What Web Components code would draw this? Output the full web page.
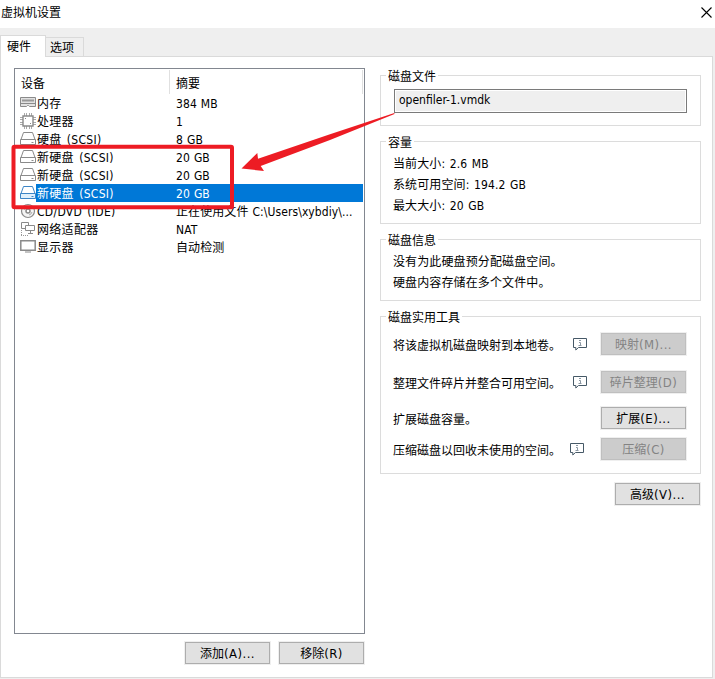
<!DOCTYPE html>
<html lang="zh-CN">
<head>
<meta charset="utf-8">
<title>虚拟机设置</title>
<style>
html,body{margin:0;padding:0;overflow:hidden}
body{width:715px;height:679px;font:12px/18px "DejaVu Sans Condensed","Noto Sans CJK SC",sans-serif;color:#000;background:#efefef}
</style>
</head>
<body>
<vm-settings></vm-settings>
<script>
const define = (name, css, html) => customElements.define(name, class extends HTMLElement {
  constructor() {
    super();
    const t = document.createElement('template');
    t.innerHTML = `<style>*{box-sizing:border-box}:host{box-sizing:border-box}${css}</style>` + (typeof html === 'function' ? html(this) : html);
    this.attachShadow({mode: 'open'}).append(t.content.cloneNode(true));
  }
});

const disk = (c, f) => `<path d="M3.500 1.500h9l2.500 7v5h-14v-5z" fill="#fff" stroke="${c}"/><path d="M.500 8.500h15v5H.500z" fill="${f}" stroke="${c}"/><path d="M11.500 11.500h2" stroke="${c}"/>`;
const icons = {
  memory: '<path d="M.500 2.500h15v9H9.500l-1-1h-1l-1 1H.500z" fill="#e2e2e2" stroke="#8a8a8a"/><path d="M2 4.500h12v2H2z" fill="#999"/><path d="M1 8.500h14" stroke="#8a8a8a"/>',
  cpu: '<path d="M4.500 0v16M6.500 0v16M9.500 0v16M11.500 0v16M0 4.500h16M0 6.500h16M0 9.500h16M0 11.500h16" stroke="#aaa"/><path d="M3 3h10v10H3z" fill="#fff" stroke="#8a8a8a" stroke-width="1.400"/><path d="M5 5h1v1H5zM10 10h1v1h-1z" fill="#888"/>',
  disk: disk('#8a8a8a', '#fff'),
  diskon: disk('#3c85c6', '#dff0fc'),
  cd: '<circle cx="8" cy="8" r="6.500" fill="#f5f5f5" stroke="#8a8a8a" stroke-width="1.200"/><circle cx="8" cy="8" r="2" fill="#fff" stroke="#8a8a8a" stroke-width="1.500"/><path d="M4 7a4 4 0 0 1 3-3M12 9a4 4 0 0 1-3 3" fill="none" stroke="#aaa"/>',
  net: '<path d="M1.500 1.500h7v6h-7z" fill="#fff" stroke="#8a8a8a"/><path d="M5.500 4.500h9v5h-9z" fill="#fff" stroke="#8a8a8a"/><path d="M10.500 10v2M8 12.500h5" stroke="#8a8a8a"/><path d="M1.500 9v5M1 14.500h8" stroke="#999" stroke-dasharray="1 1" fill="none"/>',
  display: '<path d="M.800 1.800h14.400v9.400H.800z" fill="#fff" stroke="#8a8a8a" stroke-width="1.500"/><path d="M5 13h6" stroke="#8a8a8a"/>'
};

define('title-bar', ':host{display:flex;height:28px;background:#fff;justify-content:space-between;padding:4px 3px 0 1px}svg{margin-top:3px}',
  '<span><slot></slot></span><svg width="11" height="11" viewBox="0 0 11 11"><path d="M.5.5l10 10M10.500.5l-10 10" stroke="#000" stroke-width="1.100"/></svg>');

define('tab-strip', ':host{display:flex;height:28px;padding-top:7px;align-items:flex-end;background:#efefef}', '<slot></slot>');
define('tab-item', `:host{display:block;width:38px;height:20px;margin-bottom:-1px;border:1px solid #dadada;border-left:0;padding:1px 0 0 4px;background:#efefef}
:host([selected]){width:46px;height:22px;border-left:1px solid #dadada;border-bottom:0;background:#fff;padding:2px 0 0 6px;position:relative;z-index:1}`, '<slot></slot>');

define('device-list', `:host{display:flex;flex-direction:column;width:351px;height:566px;border:1px solid #828790;background:#fff}
header{display:grid;grid-template-columns:155px 1fr;height:25px;padding:1px 1px 0 0;flex:none}
header span{height:24px;border-right:1px solid #e0e0e0;padding:5px 0 0 6px}`,
  '<header><span>设备</span><span>摘要</span></header><slot></slot>');

define('device-row', `:host{display:grid;grid-template-columns:16px 140px 1fr;height:18px;padding:0 1px 0 5px;white-space:nowrap}
svg{display:block;margin-top:1px}div{height:18px;line-height:20px}.n{padding-left:1px;word-spacing:1.5px;letter-spacing:.3px}.s{word-spacing:.5px;letter-spacing:.08px}:host([selected]) div{background:#0078d7;color:#fff}
`, e => `<svg width="16" height="16" viewBox="0 0 16 16">${icons[e.getAttribute('icon')]}</svg><div class="n"><slot></slot></div><div class="s"><slot name="summary"></slot></div>`);

define('group-box', `:host{display:block;width:321px;border:1px solid #dcdcdc}
.l{display:block;width:fit-content;height:18px;margin:-9px 0 0 5px;padding:1px 2px 0;background:#fff}`,
  e => `<span class="l">${e.getAttribute('label')}</span><slot></slot>`);

define('file-field', ':host{display:block;width:293px;height:24px;margin:4px 0 0 13px;border:1px solid #7a7a7a;box-shadow:inset 0 0 0 1px #fff;background:#efefef;padding:1px 4px}', '<slot></slot>');
define('info-line', ':host{display:block;height:21px;padding:4px 0 0 12px;white-space:nowrap;word-spacing:1px;letter-spacing:.12px}', '<slot></slot>');
define('push-button', `:host{display:flex;width:87px;height:24px;border:1px solid #efefef;flex:none}
div{flex:1;border:1px solid #adadad;background:#e1e1e1;text-align:center;line-height:22px;white-space:nowrap}i{font-style:normal;font-size:13px;line-height:1;letter-spacing:.45px}
:host([disabled]) div{background:#ccc;border-color:#bfbfbf;color:#838383}`, '<div><slot></slot><i><slot name="key"></slot></i></div>');
define('info-bubble', ':host{display:block;width:14px;height:13px;flex:none}svg{display:block}',
  '<svg width="14" height="13" viewBox="0 0 14 13"><path d="M.500.500h13v9H5.500L2.800 12V9.500H.500z" fill="#fff" stroke="#465967"/><path d="M6 2.500h2M6 4.500h1.500v3M5.500 7.500h3" stroke="#8b98a3" fill="none"/></svg>');
define('tool-row', `:host{display:grid;grid-template-columns:180px 27px 87px;height:24px;padding-left:12px;align-items:center;white-space:nowrap}
span{padding-top:3px}:host([near]) ::slotted(info-bubble){margin-left:-3px}::slotted(push-button){grid-column:3}`,
  '<span><slot></slot></span><slot name="info"></slot><slot name="action"></slot>');

define('red-callout', ':host{position:absolute;left:0;top:0;pointer-events:none}svg{display:block}',
  '<svg width="400" height="215" viewBox="0 0 400 215"><rect x="13.500" y="146.700" width="218.500" height="60.500" rx="1" fill="none" stroke="#ed1c24" stroke-width="4"/><path d="M241.500 168.500L257.300 153L258 158.800L330 134.200L394.300 113L394.500 114L330 140L260.700 166L264 171Z" fill="#ed1c24"/></svg>');

const button = (label, key, attrs = '') => `<push-button ${attrs}>${label}<span slot="key">${key}</span></push-button>`;

define('vm-settings', `:host{display:block;position:relative;width:715px;height:679px}
main{display:grid;grid-template-columns:351px 321px;column-gap:15px;width:713px;height:622px;border:1px solid #dadada;background:#fff;padding:11px 0 0 13px}
.btns{display:flex;justify-content:flex-end;gap:7px;margin-top:7px}
aside{display:flex;flex-direction:column;padding-top:7px}`,
`<title-bar>虚拟机设置</title-bar>
<tab-strip><tab-item selected>硬件</tab-item><tab-item>选项</tab-item></tab-strip>
<main>
<section><device-list>
${[['memory','内存','384 MB'],['cpu','处理器','1'],['disk','硬盘 (SCSI)','8 GB'],['disk','新硬盘 (SCSI)','20 GB'],['disk','新硬盘 (SCSI)','20 GB'],['diskon','新硬盘 (SCSI)','20 GB'],['cd','CD/DVD (IDE)','正在使用文件 C:\\Users\\xybdiy\\...'],['net','网络适配器','NAT'],['display','显示器','自动检测']]
 .map(([i,n,s]) => `<device-row icon="${i}"${i==='diskon'?' selected':''}>${n}<span slot="summary">${s}</span></device-row>`).join('')}
</device-list><div class="btns">${button('添加','(A)...')}${button('移除','(R)')}</div></section>
<aside>
<group-box label="磁盘文件" style="height:51px"><file-field>openfiler-1.vmdk</file-field></group-box>
<group-box label="容量" style="height:83px;margin-top:15px"><info-line>当前大小: 2.6 MB</info-line><info-line>系统可用空间: 194.2 GB</info-line><info-line>最大大小: 20 GB</info-line></group-box>
<group-box label="磁盘信息" style="height:62px;margin-top:15px"><info-line>没有为此硬盘预分配磁盘空间。</info-line><info-line>硬盘内容存储在多个文件中。</info-line></group-box>
<group-box label="磁盘实用工具" style="height:158px;margin-top:15px">
<tool-row style="margin-top:6px">将该虚拟机磁盘映射到本地卷。<info-bubble slot="info"></info-bubble>${button('映射','(M)...','slot="action" disabled')}</tool-row>
<tool-row style="margin-top:14px">整理文件碎片并整合可用空间。<info-bubble slot="info"></info-bubble>${button('碎片整理','(D)','slot="action" disabled')}</tool-row>
<tool-row style="margin-top:12px">扩展磁盘容量。${button('扩展','(E)...','slot="action"')}</tool-row>
<tool-row near style="margin-top:7px">压缩磁盘以回收未使用的空间。<info-bubble slot="info"></info-bubble>${button('压缩','(C)','slot="action" disabled')}</tool-row>
</group-box>
${button('高级','(V)...','style="align-self:flex-end;margin-top:8px"')}
</aside>
</main>
<red-callout></red-callout>`);
</script>
</body>
</html>
